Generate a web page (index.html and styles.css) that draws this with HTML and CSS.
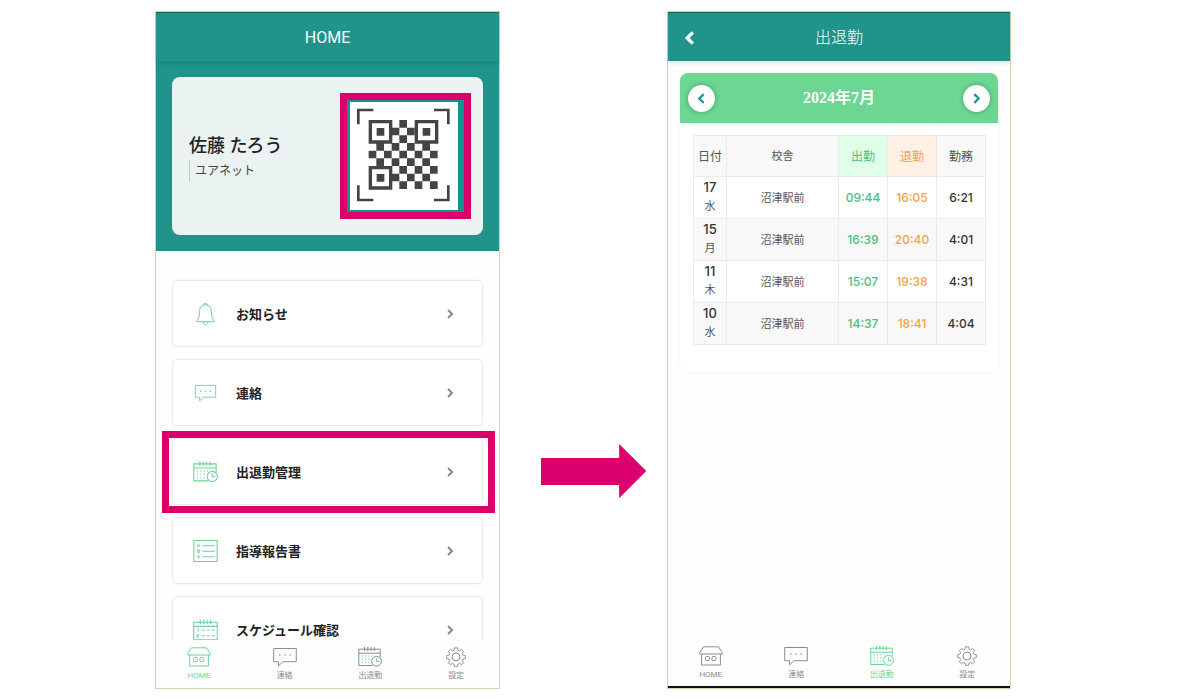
FILE: index.html
```html
<!DOCTYPE html>
<html lang="ja">
<head>
<meta charset="utf-8">
<meta name="viewport" content="width=device-width, initial-scale=1">
<title>出退勤管理</title>
<link rel="stylesheet" href="styles.css">
</head>
<body>
<svg class="defs" aria-hidden="true">
  <symbol id="i-home" viewBox="0 0 24 20"><path d="M4.500 .8h15l3.700 5.700v1.500H.8V6.500zM2.600 8v11h18.800V8"/><rect x="6.500" y="10.500" width="3.800" height="4" rx="1"/><rect x="13" y="10.500" width="3.800" height="4" rx="1"/></symbol>
  <symbol id="i-chat" viewBox="0 0 24 20"><path d="M.7 1.500h22.600v13.200H10L5.500 18.800v-4.100H.7z"/><path class="accent" stroke-width="1.600" d="M6 8h1.600M11.200 8h1.600M16.400 8h1.600"/></symbol>
  <symbol id="i-attend" viewBox="0 0 24 20"><path d="M14.500 18.500H.8V2.200h21.400v8M.8 6.200h21.400M6.500 0v4M9.800 0v4M13.100 0v4M16.400 0v4"/><path class="accent" stroke-dasharray="1.200 2" d="M3.800 9h13M3.800 12h9.500M3.800 15h9.500"/><circle cx="18.500" cy="14.300" r="4.900"/><path class="accent" d="M18.500 11.300v3.300h3"/></symbol>
  <symbol id="i-gear" viewBox="0 0 20 20"><path d="M8.400 1h3.200l.5 2.500 1.700.7 2.100-1.500 2.300 2.300-1.500 2.100.7 1.700 2.500.5v3.200l-2.500.5-.7 1.700 1.500 2.100-2.300 2.300-2.100-1.500-1.700.7-.5 2.500H8.400l-.5-2.500-1.700-.7-2.100 1.500-2.300-2.300 1.500-2.100-.7-1.700L.1 12.500V9.300l2.500-.5.700-1.700L1.800 5l2.300-2.300 2.100 1.500 1.700-.7z" transform="translate(.6 -.1) scale(.94)"/><circle cx="10" cy="10" r="4"/></symbol>
  <symbol id="i-bell" viewBox="0 0 24 24"><path d="M10 3.600C9.600 .6 14.400 .6 14 3.600M12 2.800c-3.900 0-5.900 2.600-5.900 6.700 0 5-.8 7-2.800 9.200v1h17.400v-1c-2-2.200-2.800-4.200-2.800-9.200 0-4.100-2-6.700-5.900-6.700zM9.700 19.700c0 3.700 4.600 3.700 4.600 0"/></symbol>
  <symbol id="i-report" viewBox="0 0 24 22"><path d="M.8 1h22.400v20H.8z"/><path class="accent" d="M9 6h12M9 11.200h12M9 16.500h12"/><path stroke-width=".7" d="M4 7.200l1.200-3 1.200 3M4.400 6.300h1.600M4.200 9.700h2v3h-2zM4.200 11.200h2M4 18l1.200-3 1.200 3M4.400 17h1.600"/></symbol>
  <symbol id="i-schedule" viewBox="0 0 24 20"><path d="M.7 2.500h22.600v16.800H.7zM.7 6.500h22.600M7 0v4.500M10.300 0v4.500M13.600 0v4.500M17 0v4.500"/><path class="accent" stroke-dasharray="3 1.600" d="M8.500 10h13M8.500 15.500h13"/><path class="accent" stroke-width=".8" d="M4 9l1-.7V12M3.600 14h2v1.500h-2V17h2.200"/></symbol>
  <symbol id="i-next" viewBox="0 0 10 10"><path d="M3 1l4 4-4 4"/></symbol>
  <symbol id="i-prev" viewBox="0 0 10 10"><path d="M7 1L3 5l4 4"/></symbol>
</svg>

<main class="stage">
  <section class="phone phone-home" aria-label="HOME">
    <header class="bar"><h1 class="bar-title">HOME</h1></header>
    <div class="hero">
      <div class="profile">
        <div class="person">
          <p class="name">佐藤 たろう</p>
          <p class="org">ユアネット</p>
        </div>
        <div class="qr">
          <svg class="qr-code" viewBox="45 51 324 324" role="img" aria-label="QRコード">
            <g fill="none" stroke="#444" stroke-width="8"><path d="M115 75H70v43M297 75h43v43M115 345H70v-44M297 345h43v-44"/></g>
            <g fill="none" stroke="#444" stroke-width="10"><path d="M106 110h61v61h-61zM244 110h61v61h-61zM106 248h61v61h-61z"/></g>
            <g fill="#444">
              <path d="M125 129h23v23h-23zM263 129h23v23h-23zM125 267h23v23h-23z"/>
              <path d="M193 105h23v23h-23zM170 128h23v23h-23zM216 128h23v23h-23zM193 151h23v23h-23z"/>
              <path d="M124 174h23v23h-23zM170 174h23v23h-23zM216 174h23v23h-23zM262 174h23v23h-23z"/>
              <path d="M101 197h23v23h-23zM147 197h23v23h-23zM193 197h23v23h-23zM239 197h23v23h-23zM285 197h23v23h-23z"/>
              <path d="M124 220h23v23h-23zM170 220h23v23h-23zM216 220h23v23h-23zM262 220h23v23h-23z"/>
              <path d="M193 243h23v23h-23zM239 243h23v23h-23zM285 243h23v23h-23z"/>
              <path d="M170 266h23v23h-23zM216 266h23v23h-23zM262 266h23v23h-23z"/>
              <path d="M193 289h23v23h-23zM239 289h23v23h-23zM285 289h23v23h-23z"/>
            </g>
          </svg>
        </div>
      </div>
    </div>
    <ul class="menu">
      <li><a class="item" href="#news"><svg class="item-icon"><use href="#i-bell"/></svg><span>お知らせ</span><svg class="chev"><use href="#i-next"/></svg></a></li>
      <li><a class="item" href="#contact"><svg class="item-icon item-icon-small"><use href="#i-chat"/></svg><span>連絡</span><svg class="chev"><use href="#i-next"/></svg></a></li>
      <li><a class="item marked" href="#attendance"><svg class="item-icon"><use href="#i-attend"/></svg><span>出退勤管理</span><svg class="chev"><use href="#i-next"/></svg></a></li>
      <li><a class="item" href="#report"><svg class="item-icon"><use href="#i-report"/></svg><span>指導報告書</span><svg class="chev"><use href="#i-next"/></svg></a></li>
      <li><a class="item" href="#schedule"><svg class="item-icon"><use href="#i-schedule"/></svg><span>スケジュール確認</span><svg class="chev"><use href="#i-next"/></svg></a></li>
    </ul>
    <nav class="tabs" aria-label="メイン">
      <a class="tab active" href="#home"><svg><use href="#i-home"/></svg>HOME</a>
      <a class="tab" href="#contact"><svg><use href="#i-chat"/></svg>連絡</a>
      <a class="tab" href="#attendance"><svg><use href="#i-attend"/></svg>出退勤</a>
      <a class="tab" href="#settings"><svg><use href="#i-gear"/></svg>設定</a>
    </nav>
  </section>

  <svg class="arrow" viewBox="0 0 105 54" aria-hidden="true"><path d="M0 14h78V0l27 27-27 27V41H0z"/></svg>

  <section class="phone phone-attend" aria-label="出退勤">
    <header class="bar">
      <button class="back" type="button" aria-label="戻る"><svg><use href="#i-prev"/></svg></button>
      <h1 class="bar-title">出退勤</h1>
    </header>
    <div class="sheet-area">
      <div class="sheet">
        <div class="month">
          <button class="round" type="button" aria-label="前の月"><svg><use href="#i-prev"/></svg></button>
          <h2 class="month-title">2024年7月</h2>
          <button class="round" type="button" aria-label="次の月"><svg><use href="#i-next"/></svg></button>
        </div>
        <table class="log">
          <colgroup><col class="c-date"><col><col class="c-time"><col class="c-time"><col class="c-time"></colgroup>
          <thead><tr><th>日付</th><th class="place">校舎</th><th class="in">出勤</th><th class="out">退勤</th><th>勤務</th></tr></thead>
          <tbody>
            <tr><td class="date"><b>17</b>水</td><td class="place">沼津駅前</td><td class="in">09:44</td><td class="out">16:05</td><td class="sum">6:21</td></tr>
            <tr><td class="date"><b>15</b>月</td><td class="place">沼津駅前</td><td class="in">16:39</td><td class="out">20:40</td><td class="sum">4:01</td></tr>
            <tr><td class="date"><b>11</b>木</td><td class="place">沼津駅前</td><td class="in">15:07</td><td class="out">19:38</td><td class="sum">4:31</td></tr>
            <tr><td class="date"><b>10</b>水</td><td class="place">沼津駅前</td><td class="in">14:37</td><td class="out">18:41</td><td class="sum">4:04</td></tr>
          </tbody>
        </table>
      </div>
    </div>
    <nav class="tabs" aria-label="メイン">
      <a class="tab" href="#home"><svg><use href="#i-home"/></svg>HOME</a>
      <a class="tab" href="#contact"><svg><use href="#i-chat"/></svg>連絡</a>
      <a class="tab active" href="#attendance"><svg><use href="#i-attend"/></svg>出退勤</a>
      <a class="tab" href="#settings"><svg><use href="#i-gear"/></svg>設定</a>
    </nav>
  </section>
</main>
</body>
</html>
```

FILE: styles.css
```css
:root {
  --teal: #20938a;
  --green: #6bd793;
  --pink: #db006b;
}
* { box-sizing: border-box; }
body {
  margin: 0;
  background: #fff;
  color: #222;
  font-family: Roboto, "Noto Sans CJK JP", sans-serif;
}
h1, h2, p, ul { margin: 0; padding: 0; }
ul { list-style: none; }
a { color: inherit; text-decoration: none; }
button { padding: 0; border: 0; background: none; }
.defs { position: absolute; width: 0; height: 0; }
svg { fill: none; stroke: currentColor; flex: none; }

.stage {
  display: grid;
  grid-template-columns: 155fr 345fr 167fr 344fr 189fr;
  grid-template-rows: minmax(0, 1fr);
  height: 100vh;
  padding: 11px 0 10px;
}
.phone {
  display: flex;
  flex-direction: column;
  min-width: 0;
  border: 1px solid #cbd7ae;
  background: #fefefe;
}
.phone-home { grid-column: 2; }
.phone-attend { grid-column: 4; box-shadow: inset 0 -2px #111; }
.arrow {
  align-self: center;
  justify-self: end;
  width: 63%;
  margin: 242px 21px 0 0;
  fill: var(--pink);
  stroke: none;
}

.bar {
  position: relative;
  display: flex;
  align-items: center;
  justify-content: center;
  flex: none;
  height: 49px;
  padding-top: 1px;
  border-top: 1px solid #1b625e;
  background: var(--teal);
  color: #fff;
  box-shadow: 0 2px 5px rgba(0, 0, 0, .12);
}
.bar-title { font-size: 16px; font-weight: 400; line-height: 24px; }
.phone-attend .bar-title { font-weight: 300; }
.back { position: absolute; left: 15px; color: #fff; line-height: 0; }
.back svg { width: 14px; height: 14px; stroke-width: 2.4; }

.hero { flex: none; padding: 16px; background: var(--teal); }
.profile {
  display: flex;
  align-items: center;
  justify-content: space-between;
  height: 158px;
  padding: 0 12px 0 17px;
  border-radius: 8px;
  background: #eaf3f2;
}
.person { padding-top: 2px; }
.name { font-size: 18px; font-weight: 500; line-height: 28px; }
.org {
  padding-left: 5px;
  border-left: 1px solid #c2cccb;
  color: #444;
  font-size: 12px;
  line-height: 22px;
}
.qr {
  padding: 2px 6px 2px 3px;
  border: 7px solid var(--pink);
  background: #0b958c;
  line-height: 0;
}
.qr-code { width: 108px; height: 108px; background: #fff; stroke: none; }

.menu {
  display: flex;
  flex: 1;
  flex-direction: column;
  gap: 12px;
  min-height: 0;
  padding: 29px 16px 0;
  overflow: hidden;
}
.item {
  position: relative;
  display: flex;
  align-items: center;
  height: 67px;
  padding: 0 27px 0 20px;
  border: 1px solid #ebebeb;
  border-radius: 5px;
  background: #fff;
  box-shadow: 0 0 2px rgba(0, 0, 0, .08);
  font-size: 13px;
  font-weight: 700;
}
.item span { flex: 1; padding-left: 18px; }
.item-icon { width: 25px; height: 24px; color: #6ad395; }
.item-icon-small { height: 18px; }
.accent { stroke: #6ecbc5; }
.tab .accent { stroke: currentColor; }
.chev { width: 10px; height: 10px; color: #888; stroke-width: 2; }
.marked::after {
  position: absolute;
  inset: -8px -13px -9px -11px;
  border: 7px solid var(--pink);
  content: "";
}

.tabs {
  display: grid;
  flex: none;
  grid-template-columns: repeat(4, 1fr);
  height: 48px;
  padding-top: 7px;
}
.phone-attend .tabs { height: 49px; }
.tab {
  display: flex;
  align-items: center;
  flex-direction: column;
  gap: 3px;
  color: #8c8c8c;
  font-size: 8px;
  line-height: 12px;
}
.tab svg { width: 24px; height: 20px; }
.active { color: var(--green); }

.sheet-area { flex: 1; min-height: 0; padding: 12px; }
.sheet {
  padding-bottom: 27px;
  border-radius: 8px;
  background: #fff;
  box-shadow: 0 0 5px rgba(0, 0, 0, .06);
}
.month {
  display: flex;
  align-items: center;
  justify-content: space-between;
  height: 50px;
  padding: 0 8px;
  border-radius: 8px 8px 0 0;
  background: var(--green);
}
.month-title {
  color: #fff;
  font: 700 16px/24px "Liberation Serif", "Noto Sans CJK JP", serif;
}
.round {
  display: grid;
  place-items: center;
  width: 27px;
  height: 27px;
  border-radius: 50%;
  background: #fff;
  box-shadow: 0 0 5px rgba(0, 0, 0, .3);
  color: var(--teal);
}
.round svg { width: 11px; height: 11px; stroke-width: 2; }

.log {
  width: calc(100% - 25px);
  margin: 12px 12px 0 13px;
  border-collapse: collapse;
  table-layout: fixed;
  color: #555;
  font-size: 12px;
  text-align: center;
}
.c-date { width: 33px; }
.c-time { width: 49px; }
.log th, .log td { padding: 0; border: 1px solid #ebebeb; }
.log th { height: 41px; padding-bottom: 2px; background: #f8f8f8; font-weight: 400; }
.log td { padding-bottom: 1px; }
.log .place { font-size: 11px; }
.log tbody tr:nth-child(even) { background: #f8f8f8; }
.log .in { color: #49c17c; }
.log .out { color: #f7a145; }
.log th.in { background: #e0ffe9; }
.log th.out { background: #fff1e5; }
.log td.in, .log td.out, .log .sum, .date b {
  font-family: Inter, sans-serif;
  font-size: 12px;
  font-weight: 500;
}
.log .sum, .date b { color: #333; }
.log .date { font-size: 11px; line-height: 20px; }
.log .date b { display: block; font-size: 13px; }
```
